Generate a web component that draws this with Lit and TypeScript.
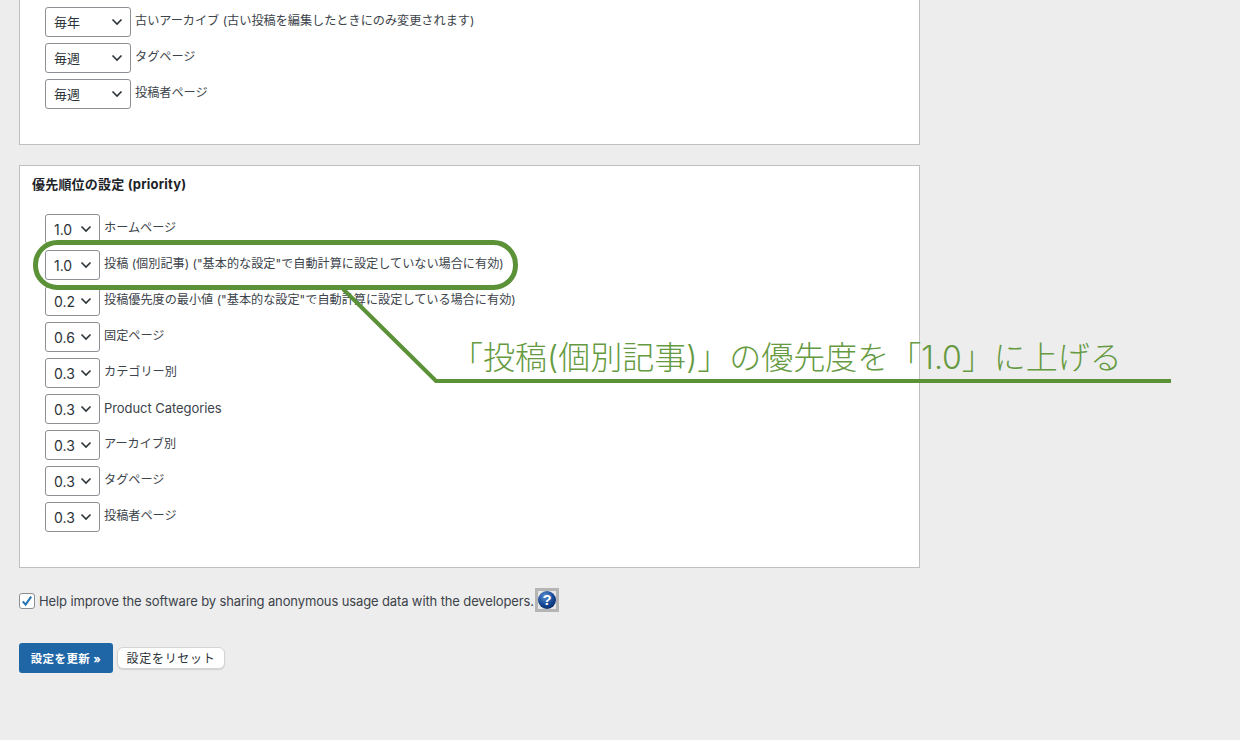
import { LitElement, html, css, svg } from "lit";
import { customElement } from "lit/decorators.js";

const chevron = html`<svg class="chev" width="12" height="8" viewBox="0 0 12 8"><path d="M1.5 1.5 L6 6 L10.5 1.5" fill="none" stroke="#2c3338" stroke-width="1.6"/></svg>`;

const freq = [
  ["毎年", "古いアーカイブ (古い投稿を編集したときにのみ変更されます)"],
  ["毎週", "タグページ"],
  ["毎週", "投稿者ページ"],
];
const prio = [
  ["1.0", "ホームページ"],
  ["1.0", '投稿 (個別記事) ("基本的な設定"で自動計算に設定していない場合に有効)'],
  ["0.2", '投稿優先度の最小値 ("基本的な設定"で自動計算に設定している場合に有効)'],
  ["0.6", "固定ページ"],
  ["0.3", "カテゴリー別"],
  ["0.3", "Product Categories"],
  ["0.3", "アーカイブ別"],
  ["0.3", "タグページ"],
  ["0.3", "投稿者ページ"],
];

@customElement("app-root")
export class AppRoot extends LitElement {
  static styles = css`
    :host {
      display: block;
      width: 1240px;
      height: 740px;
      position: relative;
      overflow: hidden;
      background: #ededed;
      font-family: Inter, "Noto Sans CJK JP", sans-serif;
      font-size: 13px;
      color: #3c434a;
    }
    .page { display: flex; flex-direction: column; padding: 0 19px; width: 901px; box-sizing: content-box; }
    .panel { width: 901px; box-sizing: border-box; border: 1px solid #c0c0c0; background: #fff; }
    .p1 { height: 145px; border-top: 0; padding: 7px 25px 0; margin-bottom: 20px; }
    .p2 { height: 403px; padding: 0 25px; }
    .title { font-size: 13px; font-weight: 700; color: #1d2327; margin: 9px -13px 0; line-height: 18px; height: 39px; letter-spacing: 0.2px; }
    .rows { display: flex; flex-direction: column; gap: 6px; }
    .row { display: flex; align-items: flex-start; gap: 4px; height: 30px; }
    .sel { height: 30px; box-sizing: border-box; border: 1px solid #8c8f94; border-radius: 3px; background: #fff;
      display: flex; align-items: center; justify-content: space-between; font-size: 14px; line-height: 26px; color: #2c3338; flex: none; }
    .wide { width: 86px; padding: 0 7px 0 8px; font-size: 13px; }
    .wide span { padding-bottom: 1px; }
    .narrow { width: 55px; padding: 0 7px 0 8px; }
    .narrow span { padding-top: 1px; }
    .label { line-height: 18px; padding-top: 4.5px; white-space: nowrap; font-size: 12.15px; }
    .latin { font-size: 13px; letter-spacing: -0.06px; }
    .chev { flex: none; }
    .help { display: flex; align-items: center; margin-top: 20px; height: 24px; letter-spacing: -0.125px; }
    .help span { padding-top: 2px; }
    .check { width: 16px; height: 16px; box-sizing: border-box; border: 1px solid #8c8f94; border-radius: 3px; background: #fff;
      display: flex; align-items: center; justify-content: center; margin-right: 4px; margin-top: 2px; }
    .qbox { width: 24px; height: 24px; box-sizing: border-box; background: #b5b5b5; padding: 3px; margin-left: 1px; }
    .qbox svg { display: block; }
    .buttons { display: flex; align-items: center; gap: 4px; margin-top: 31px; }
    .primary { width: 94px; height: 30px; border-radius: 3px; background: #1e66a6; color: #fff; font-size: 11.5px; font-weight: 700;
      display: flex; align-items: center; justify-content: center; letter-spacing: 0.4px; }
    .secondary { width: 108px; height: 22px; box-sizing: border-box; border: 1px solid #d4d4d4; border-radius: 6px; background: #fff; color: #2c3338;
      box-shadow: 0 1px 1px rgba(0, 0, 0, 0.12); padding-top: 2px;
      font-size: 12px; display: flex; align-items: center; justify-content: center; letter-spacing: 0.7px; line-height: 18px; }
    .overlay { position: absolute; left: 0; top: 0; pointer-events: none; }
    .note { position: absolute; left: 451px; top: 336px; font-size: 32px; line-height: 44px; color: #659a41; white-space: nowrap; font-weight: 300; letter-spacing: 0; }
  `;

  row(v: string, l: string, cls: string) {
    const latin = /^[A-Za-z ]+$/.test(l);
    return html`<div class="row"><div class="sel ${cls}"><span>${v}</span>${chevron}</div><span class="label ${latin ? "latin" : ""}">${l}</span></div>`;
  }

  render() {
    return html`
      <div class="page">
        <div class="panel p1"><div class="rows">${freq.map((r) => this.row(r[0], r[1], "wide"))}</div></div>
        <div class="panel p2">
          <div class="title">優先順位の設定 (priority)</div>
          <div class="rows">${prio.map((r) => this.row(r[0], r[1], "narrow"))}</div>
        </div>
        <div class="help">
          <div class="check"><svg width="14" height="14" viewBox="0 0 14 14"><path d="M2.8 7.4 L5.6 10.6 L11.2 2.6" fill="none" stroke="#2271b1" stroke-width="2"/></svg></div>
          <span>Help improve the software by sharing anonymous usage data with the developers.</span>
          <div class="qbox">
            <svg width="18" height="18" viewBox="0 0 18 18">
              <defs><radialGradient id="q" cx="40%" cy="30%" r="75%"><stop offset="0" stop-color="#5d8fd0"/><stop offset="0.6" stop-color="#174a96"/><stop offset="1" stop-color="#0b2a66"/></radialGradient></defs>
              <rect width="18" height="18" fill="#e8e8e8"/>
              <circle cx="9" cy="9" r="9" fill="url(#q)"/>
              <text x="9" y="14.2" text-anchor="middle" font-family="Liberation Sans" font-weight="700" font-size="15" fill="#fff">?</text>
            </svg>
          </div>
        </div>
        <div class="buttons">
          <div class="primary">設定を更新 »</div>
          <div class="secondary">設定をリセット</div>
        </div>
      </div>
      <svg class="overlay" width="1240" height="740" viewBox="0 0 1240 740">
        ${svg`<rect x="35.5" y="242.5" width="480" height="45" rx="22" fill="none" stroke="#5b9137" stroke-width="5"/>
        <path d="M343 289 L436 381 L1171 381" fill="none" stroke="#5b9137" stroke-width="4"/>`}
      </svg>
      <div class="note">「投稿(個別記事)」の優先度を「1.0」に上げる</div>
    `;
  }
}
